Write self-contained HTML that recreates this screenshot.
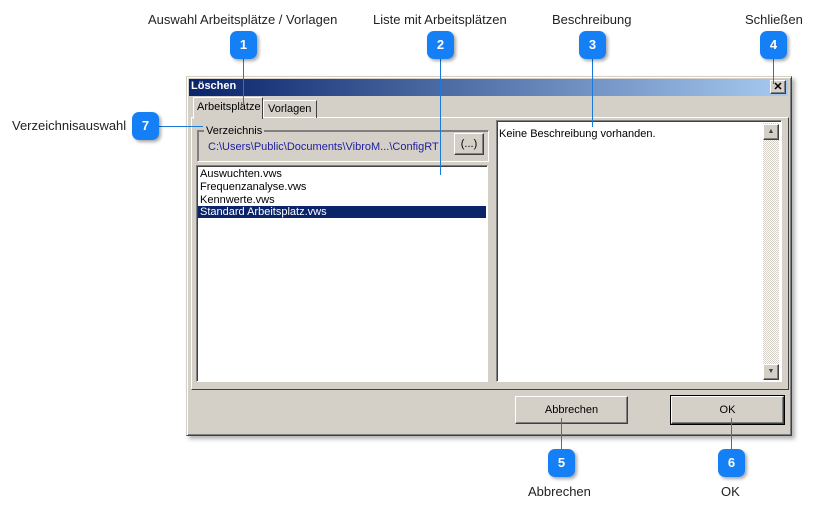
<!DOCTYPE html><html><head><style>
body{margin:0;width:820px;height:515px;background:#fff;position:relative;font-family:"Liberation Sans",sans-serif;overflow:hidden}
.a{position:absolute}
.lbl{position:absolute;font-size:13px;color:#222;white-space:nowrap}
.b{position:absolute;width:27px;height:28px;border-radius:7px;background:#1580f5;color:#fff;font-weight:bold;font-size:13px;text-align:center;line-height:28px;box-shadow:2px 2px 3px rgba(0,0,0,.35)}
.ln{position:absolute;background:#1a7ad8}
.s{font-size:11px;color:#000}
.sunk{border-top:1px solid #808080;border-left:1px solid #808080;border-right:1px solid #fff;border-bottom:1px solid #fff;box-shadow:inset 1px 1px 0 #404040}
.btn{position:absolute;background:#d4d0c8;border:1px solid;border-color:#fff #404040 #404040 #fff;box-shadow:inset -1px -1px 0 #808080;text-align:center;font-size:11px}
</style></head><body>
<div class="lbl" style="left:148px;top:12px">Auswahl Arbeitsplätze / Vorlagen</div>
<div class="lbl" style="left:373px;top:12px">Liste mit Arbeitsplätzen</div>
<div class="lbl" style="left:552px;top:12px">Beschreibung</div>
<div class="lbl" style="left:745px;top:12px">Schließen</div>
<div class="lbl" style="left:12px;top:118px">Verzeichnisauswahl</div>
<div class="lbl" style="left:528px;top:484px">Abbrechen</div>
<div class="lbl" style="left:721px;top:484px">OK</div>

<div class="a" style="left:186px;top:76px;width:604px;height:358px;background:#d4d0c8;border:1px solid;border-color:#d4d0c8 #404040 #404040 #d4d0c8;box-shadow:inset 1px 1px 0 #fff,inset -1px -1px 0 #808080,3px 3px 4px rgba(0,0,0,.3)"></div>
<div class="a" style="left:189px;top:79px;width:599px;height:17px;background:linear-gradient(90deg,#0a246a,#a6caf0)"></div>
<div class="a" style="left:191px;top:80px;color:#fff;font-weight:bold;font-size:11px">Löschen</div>
<div class="btn" style="left:770px;top:80px;width:14px;height:12px;font-size:11px;line-height:12px;font-weight:bold">✕</div>
<div class="a" style="left:191px;top:117px;width:596px;height:271px;border:1px solid;border-color:#fff #404040 #404040 #fff"></div>
<div class="a" style="left:193px;top:97px;width:68px;height:21px;background:#d4d0c8;border:1px solid;border-color:#fff #404040 transparent #fff;border-bottom:none"></div>
<div class="a s" style="left:197px;top:101px">Arbeitsplätze</div>
<div class="a" style="left:263px;top:100px;width:52px;height:17px;border:1px solid;border-color:#fff #404040 transparent #fff;border-bottom:none"></div>
<div class="a s" style="left:268px;top:103px">Vorlagen</div>
<div class="a" style="left:197px;top:130px;width:290px;height:30px;border:1px solid;border-color:#808080 #fff #fff #808080;box-shadow:1px 1px 0 #808080 inset"></div>
<div class="a s" style="left:204px;top:125px;background:#d4d0c8;padding:0 2px">Verzeichnis</div>
<div class="a s" style="left:208px;top:141px;color:#2020a0">C:\Users\Public\Documents\VibroM...\ConfigRT</div>
<div class="btn" style="left:454px;top:133px;width:28px;height:20px;line-height:20px">(...)</div>
<div class="a sunk" style="left:196px;top:165px;width:290px;height:215px;background:#fff"></div>
<div class="a s" style="left:200px;top:168px;line-height:13px">Auswuchten.vws<br>Frequenzanalyse.vws<br>Kennwerte.vws</div>
<div class="a s" style="left:198px;top:206px;width:288px;height:12px;background:#0a246a;color:#fff;line-height:12px;padding-left:2px;box-sizing:border-box">Standard Arbeitsplatz.vws</div>
<div class="a sunk" style="left:496px;top:120px;width:284px;height:260px;background:#fff"></div>
<div class="a s" style="left:499px;top:128px">Keine Beschreibung vorhanden.</div>
<div class="a" style="left:763px;top:123px;width:16px;height:256px;background:repeating-conic-gradient(#fff 0 25%,#d4d0c8 0 50%) 0 0/2px 2px"></div>
<div class="btn" style="left:763px;top:124px;width:14px;height:14px;font-size:7px;line-height:14px;color:#444">▲</div>
<div class="btn" style="left:763px;top:364px;width:14px;height:14px;font-size:7px;line-height:14px;color:#444">▼</div>
<div class="btn" style="left:515px;top:396px;width:111px;height:26px;line-height:26px">Abbrechen</div>
<div class="btn" style="left:671px;top:396px;width:111px;height:26px;line-height:26px;outline:1px solid #000">OK</div>

<div class="ln" style="left:243px;top:58px;width:1px;height:48px"></div>
<div class="ln" style="left:440px;top:58px;width:1px;height:117px"></div>
<div class="ln" style="left:592px;top:58px;width:1px;height:69px"></div>
<div class="ln" style="left:773px;top:58px;width:1px;height:26px"></div>
<div class="ln" style="left:158px;top:126px;width:45px;height:1px"></div>
<div class="ln" style="left:561px;top:418px;width:1px;height:34px"></div>
<div class="ln" style="left:731px;top:418px;width:1px;height:34px"></div>
<div class="b" style="left:230px;top:31px">1</div>
<div class="b" style="left:427px;top:31px">2</div>
<div class="b" style="left:579px;top:31px">3</div>
<div class="b" style="left:760px;top:31px">4</div>
<div class="b" style="left:132px;top:112px">7</div>
<div class="b" style="left:548px;top:449px">5</div>
<div class="b" style="left:718px;top:449px">6</div>
</body></html>
